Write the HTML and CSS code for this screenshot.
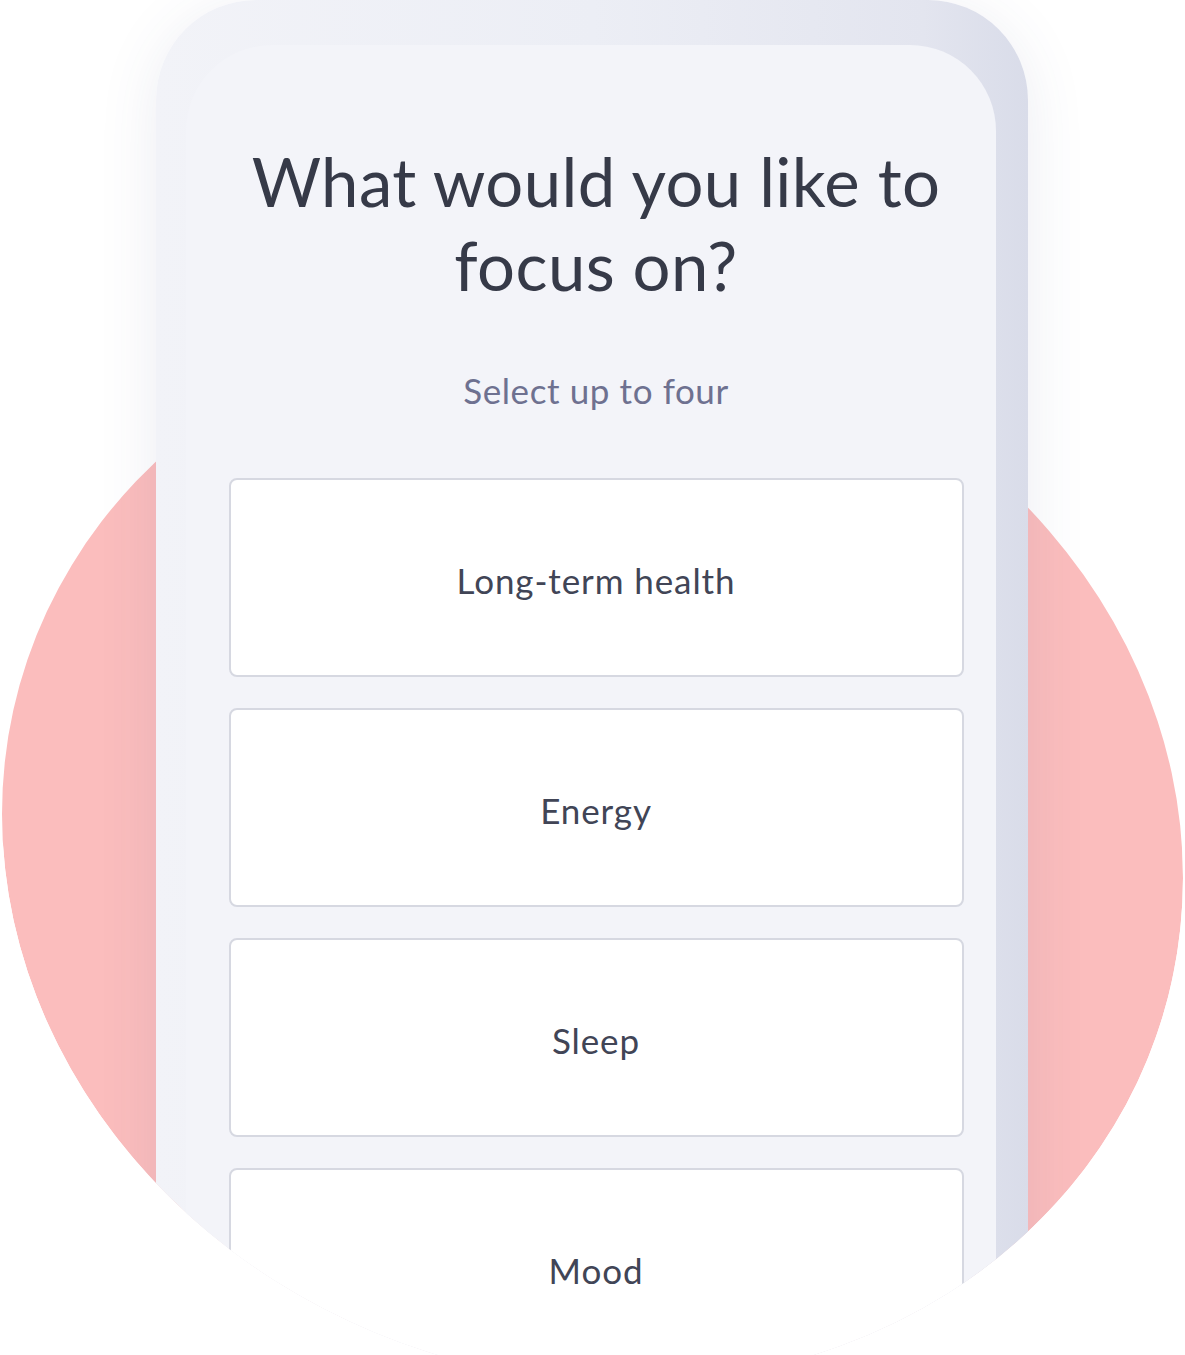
FILE: index.html
```html
<!DOCTYPE html>
<html lang="en">
<head>
  <meta charset="UTF-8" />
  <meta name="viewport" content="width=device-width, initial-scale=1" />
  <title>Focus areas</title>
  <link rel="stylesheet" href="styles.css">
</head>
<body>

<svg class="defs" width="0" height="0" aria-hidden="true">
  <defs>
    <clipPath id="stageClip" clipPathUnits="userSpaceOnUse">
      <rect x="0" y="0" width="1185" height="846" />
      <ellipse cx="592.5" cy="846" rx="590.5" ry="536"
               transform="translate(592.5 846) skewY(3.1) translate(-592.5 -846)" />
    </clipPath>
  </defs>
</svg>

<div class="stage">

  <!-- pink blob behind the phone -->
  <svg class="blob" width="1185" height="1355" viewBox="0 0 1185 1355" aria-hidden="true">
    <ellipse cx="592.5" cy="846" rx="590.5" ry="536" fill="#fbbdbd"
             transform="translate(592.5 846) skewY(3.1) translate(-592.5 -846)" />
  </svg>

  <div class="phone">
    <div class="screen">
      <h1 class="title">What would you like to focus on?</h1>
      <p class="subtitle">Select up to four</p>

      <div class="options">
        <div class="option">Long-term health</div>
        <div class="option">Energy</div>
        <div class="option">Sleep</div>
        <div class="option">Mood</div>
      </div>
    </div>
  </div>

</div>

</body>
</html>
```

FILE: styles.css
```css
body {
  margin: 0;
  background: #ffffff;
  font-family: 'Lato', 'Noto Sans', sans-serif;
}
.defs {
  position: absolute;
}
.stage {
  position: relative;
  width: 1185px;
  height: 1355px;
  overflow: hidden;
  display: flex;
  justify-content: center;
  clip-path: url(#stageClip);
}
.blob {
  position: absolute;
  left: 0;
  top: 0;
}
.phone {
  position: relative;
  width: 872px;
  height: 1420px;
  margin-left: -2px;
  box-sizing: border-box;
  padding: 45px 32px 0 30px;
  border-radius: 100px 100px 0 0;
  background: linear-gradient(90deg, #f2f3f8 0%, #eceef5 50%, #e3e5ef 88%, #d9dce9 100%);
  box-shadow: 0 10px 60px rgba(70, 80, 130, 0.1);
}
.screen {
  height: 100%;
  box-sizing: border-box;
  padding: 94px 32px 0 43px;
  border-radius: 86px 86px 0 0;
  background: #f3f4f9;
}
.title {
  margin: 0;
  text-align: center;
  font-size: 67px;
  line-height: 84px;
  font-weight: 400;
  letter-spacing: 0.4px;
  color: #363a48;
}
.subtitle {
  margin: 63px 0 0;
  text-align: center;
  font-size: 35px;
  line-height: 40px;
  letter-spacing: 0.6px;
  color: #6e7190;
}
.options {
  margin-top: 68px;
  display: flex;
  flex-direction: column;
  gap: 31px;
}
.option {
  height: 199px;
  box-sizing: border-box;
  padding-top: 4px;
  border: 2px solid #d6d8e1;
  border-radius: 8px;
  background: #ffffff;
  display: flex;
  align-items: center;
  justify-content: center;
  font-size: 35px;
  letter-spacing: 0.9px;
  color: #414556;
}
```
